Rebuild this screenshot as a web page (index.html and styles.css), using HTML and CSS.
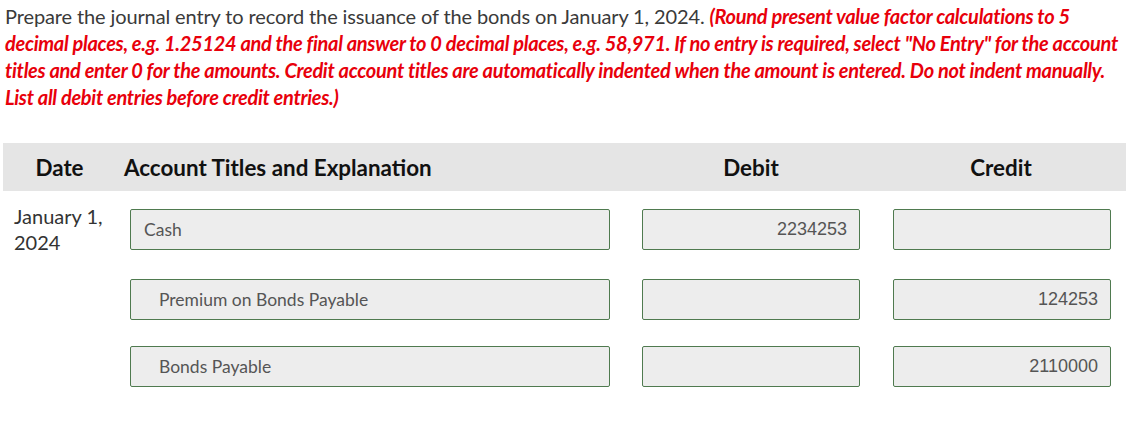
FILE: index.html
```html
<!DOCTYPE html>
<html>
<head>
<meta charset="utf-8">
<link rel="stylesheet" href="styles.css">
</head>
<body>
<div class="page">
  <p class="question">Prepare the journal entry to record the issuance of the bonds on January 1, 2024. <em class="note">(Round present value factor calculations to 5 decimal places, e.g. 1.25124 and the final answer to 0 decimal places, e.g. 58,971. If no entry is required, select "No Entry" for the account titles and enter 0 for the amounts. Credit account titles are automatically indented when the amount is entered. Do not indent manually. List all debit entries before credit entries.)</em></p>

  <div class="journal">
    <div class="head">
      <div class="h-date">Date</div>
      <div class="h-acct">Account Titles and Explanation</div>
      <div class="h-amt">Debit</div>
      <div class="h-amt">Credit</div>
    </div>

    <div class="row row-first">
      <div class="date">January 1,<br>2024</div>
      <div class="cell-acct"><div class="box acct">Cash</div></div>
      <div class="cell-amt"><div class="box amt">2234253</div></div>
      <div class="cell-amt cr"><div class="box amt"></div></div>
    </div>

    <div class="row row-second">
      <div class="date"></div>
      <div class="cell-acct"><div class="box acct indent">Premium on Bonds Payable</div></div>
      <div class="cell-amt"><div class="box amt"></div></div>
      <div class="cell-amt cr"><div class="box amt">124253</div></div>
    </div>

    <div class="row row-third">
      <div class="date"></div>
      <div class="cell-acct"><div class="box acct indent">Bonds Payable</div></div>
      <div class="cell-amt"><div class="box amt"></div></div>
      <div class="cell-amt cr"><div class="box amt">2110000</div></div>
    </div>
  </div>
</div>
</body>
</html>
```

FILE: styles.css
```css
* { box-sizing: border-box; }
html, body { margin: 0; padding: 0; background: #fff; }
body { font-family: Lato, "Open Sans", sans-serif; color: #333; }

.page { padding: 0 0 0 3px; }

.question {
  margin: 0;
  padding: 3px 0 0 2px;
  font-size: 20px;
  line-height: 27px;
  color: #3a3a3a;
  letter-spacing: -0.12px;
  width: 1130px;
}
.note {
  font-style: italic;
  font-weight: bold;
  color: #e8000b;
  letter-spacing: -0.3px;
}

.journal { margin-top: 32px; width: 1123px; }

.head, .row {
  display: grid;
  grid-template-columns: 113px 510px 250px 250px;
}
.head {
  background: #e5e5e5;
  height: 48px;
  align-items: center;
  font-weight: bold;
  font-size: 22.4px;
  color: #111;
}
.h-date { text-align: center; }
.h-acct { padding-left: 8px; }
.h-amt { text-align: center; }

.row { align-items: start; }
.row-first { padding-top: 18px; height: 88px; }
.row-second { height: 67px; }

.date {
  padding: 0 0 0 11px;
  margin-top: -6px;
  font-size: 20px;
  line-height: 26px;
  color: #333;
}

.cell-acct { padding: 0 16px 0 14px; }
.cell-amt { padding: 0 16px 0 16px; }
.cell-amt.cr { padding: 0 15px 0 17px; }

.box {
  height: 41px;
  background: #ededed;
  border: 1px solid #4f7a4f;
  border-radius: 2px;
  display: flex;
  align-items: center;
  font-size: 17.5px;
  color: #555;
}
.acct { padding-left: 13px; font-family: Lato, sans-serif; }
.acct.indent { padding-left: 28px; }
.amt {
  justify-content: flex-end;
  padding-right: 12px;
  font-family: "Liberation Sans", Arial, sans-serif;
  font-size: 18px;
}
```
